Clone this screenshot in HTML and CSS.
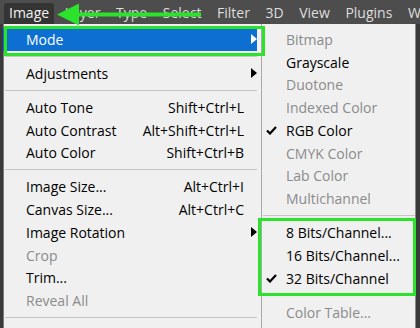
FILE: index.html
```html
<!DOCTYPE html>
<html>
<head>
<meta charset="utf-8">
<link rel="stylesheet" href="styles.css">
</head>
<body>
<div class="bar">
  <span class="tab active">Image</span>
  <span class="tab">Layer</span>
  <span class="tab">Type</span>
  <span class="tab">Select</span>
  <span class="tab">Filter</span>
  <span class="tab">3D</span>
  <span class="tab">View</span>
  <span class="tab">Plugins</span>
  <span class="tab">W</span>
</div>
<div class="menus">
  <div class="menu main">
    <div class="item hl"><span class="label">Mode</span><span class="sc"></span><span class="arr"><svg width="6" height="10" viewBox="0 0 6 10"><polygon points="0,0 6,5 0,10" fill="#ffffff"/></svg></span></div>
    <div class="sep"></div>
    <div class="item"><span class="label">Adjustments</span><span class="sc"></span><span class="arr"><svg width="6" height="10" viewBox="0 0 6 10"><polygon points="0,0 6,5 0,10" fill="#000000"/></svg></span></div>
    <div class="sep"></div>
    <div class="item"><span class="label">Auto Tone</span><span class="sc">Shift+Ctrl+L</span><span class="arr"></span></div>
    <div class="item"><span class="label">Auto Contrast</span><span class="sc">Alt+Shift+Ctrl+L</span><span class="arr"></span></div>
    <div class="item"><span class="label">Auto Color</span><span class="sc">Shift+Ctrl+B</span><span class="arr"></span></div>
    <div class="sep"></div>
    <div class="item"><span class="label">Image Size...</span><span class="sc">Alt+Ctrl+I</span><span class="arr"></span></div>
    <div class="item"><span class="label">Canvas Size...</span><span class="sc">Alt+Ctrl+C</span><span class="arr"></span></div>
    <div class="item"><span class="label">Image Rotation</span><span class="sc"></span><span class="arr"><svg width="6" height="10" viewBox="0 0 6 10"><polygon points="0,0 6,5 0,10" fill="#000000"/></svg></span></div>
    <div class="item dis"><span class="label">Crop</span><span class="sc"></span><span class="arr"></span></div>
    <div class="item"><span class="label">Trim...</span><span class="sc"></span><span class="arr"></span></div>
    <div class="item dis"><span class="label">Reveal All</span><span class="sc"></span><span class="arr"></span></div>
    <div class="sep"></div>
  </div>
  <div class="menu sub">
    <div class="sitem dis"><span class="chk"></span><span class="label">Bitmap</span></div>
    <div class="sitem"><span class="chk"></span><span class="label">Grayscale</span></div>
    <div class="sitem dis"><span class="chk"></span><span class="label">Duotone</span></div>
    <div class="sitem dis"><span class="chk"></span><span class="label">Indexed Color</span></div>
    <div class="sitem"><span class="chk"><svg width="11" height="9" viewBox="0 0 11 9"><path d="M1 4.5 L4 7.5 L10 1" fill="none" stroke="#000" stroke-width="2.2"/></svg></span><span class="label">RGB Color</span></div>
    <div class="sitem dis"><span class="chk"></span><span class="label">CMYK Color</span></div>
    <div class="sitem dis"><span class="chk"></span><span class="label">Lab Color</span></div>
    <div class="sitem dis"><span class="chk"></span><span class="label">Multichannel</span></div>
    <div class="sep"></div>
    <div class="sitem"><span class="chk"></span><span class="label">8 Bits/Channel...</span></div>
    <div class="sitem"><span class="chk"></span><span class="label">16 Bits/Channel...</span></div>
    <div class="sitem"><span class="chk"><svg width="11" height="9" viewBox="0 0 11 9"><path d="M1 4.5 L4 7.5 L10 1" fill="none" stroke="#000" stroke-width="2.2"/></svg></span><span class="label">32 Bits/Channel</span></div>
    <div class="sep"></div>
    <div class="sitem dis"><span class="chk"></span><span class="label">Color Table...</span></div>
  </div>
</div>
<div class="box box-mode"></div>
<div class="box box-bits"></div>
<svg class="arrow" width="210" height="30" viewBox="0 0 210 30">
  <line x1="76" y1="14.5" x2="201" y2="14.5" stroke="#2ae32a" stroke-width="4"/>
  <polygon points="57,14.5 79,3.5 79,25.5" fill="#2ae32a"/>
</svg>
</body>
</html>
```
FILE: styles.css
```css
html, body {
  margin: 0;
  padding: 0;
}
body {
  width: 420px;
  height: 328px;
  overflow: hidden;
  background: #3a3a3a;
  font-family: "Open Sans", "Noto Sans", sans-serif;
  font-size: 14px;
  position: relative;
}
.bar {
  height: 24px;
  background: #4d4d4d;
  display: flex;
  align-items: stretch;
  padding-left: 4px;
  gap: 5.6px;
  overflow: hidden;
}
.tab {
  color: #dedede;
  padding: 0 5px;
  margin-top: 3px;
  line-height: 20px;
  border-radius: 3px 3px 0 0;
  font-size: 14px;
  flex-shrink: 0;
}
.tab.active {
  background: #343434;
  color: #f2f2f2;
}
.menus {
  display: flex;
  align-items: flex-start;
  padding-left: 3px;
}
.menu {
  background: #f0f0f0;
  box-sizing: border-box;
  height: 304px;
}
.main {
  width: 259px;
  border-left: 1px solid #7a7a7a;
  border-right: 1px solid #a9a9a9;
  padding-top: 4px;
  padding-right: 4px;
}
.sub {
  width: 154px;
  border-right: 1px solid #8a8a8a;
  padding-top: 4px;
}
.item {
  display: flex;
  align-items: center;
  height: 22.75px;
  padding-left: 22px;
  color: #000;
  white-space: nowrap;
}
.item .label {
  flex: 1;
}
.item .sc {
  text-align: right;
}
.item .arr {
  width: 13px;
  display: flex;
  justify-content: flex-end;
  align-items: center;
}
.item.hl {
  background: #0c6fd1;
  color: #ffffff;
  margin-left: -1px;
  padding-left: 23px;
}
.dis {
  color: #8b8b8b;
}
.sep {
  height: 11.25px;
  display: flex;
  align-items: center;
  margin-left: 1px;
}
.sep::before {
  content: "";
  display: block;
  flex: 1;
  height: 1px;
  background: #c4c4c4;
}
.sitem {
  display: flex;
  align-items: center;
  height: 22.75px;
  white-space: nowrap;
  color: #000;
}
.sitem.dis {
  color: #8b8b8b;
}
.sitem .chk {
  width: 24px;
  padding-left: 4px;
  box-sizing: border-box;
  display: flex;
  align-items: center;
}
.box {
  position: absolute;
  border: 3px solid #2ae32a;
  box-sizing: border-box;
}
.box-mode {
  left: 4px;
  top: 26px;
  width: 261px;
  height: 30px;
}
.box-bits {
  left: 258px;
  top: 218px;
  width: 158px;
  height: 78px;
}
.arrow {
  position: absolute;
  left: 0;
  top: 0;
}
```
